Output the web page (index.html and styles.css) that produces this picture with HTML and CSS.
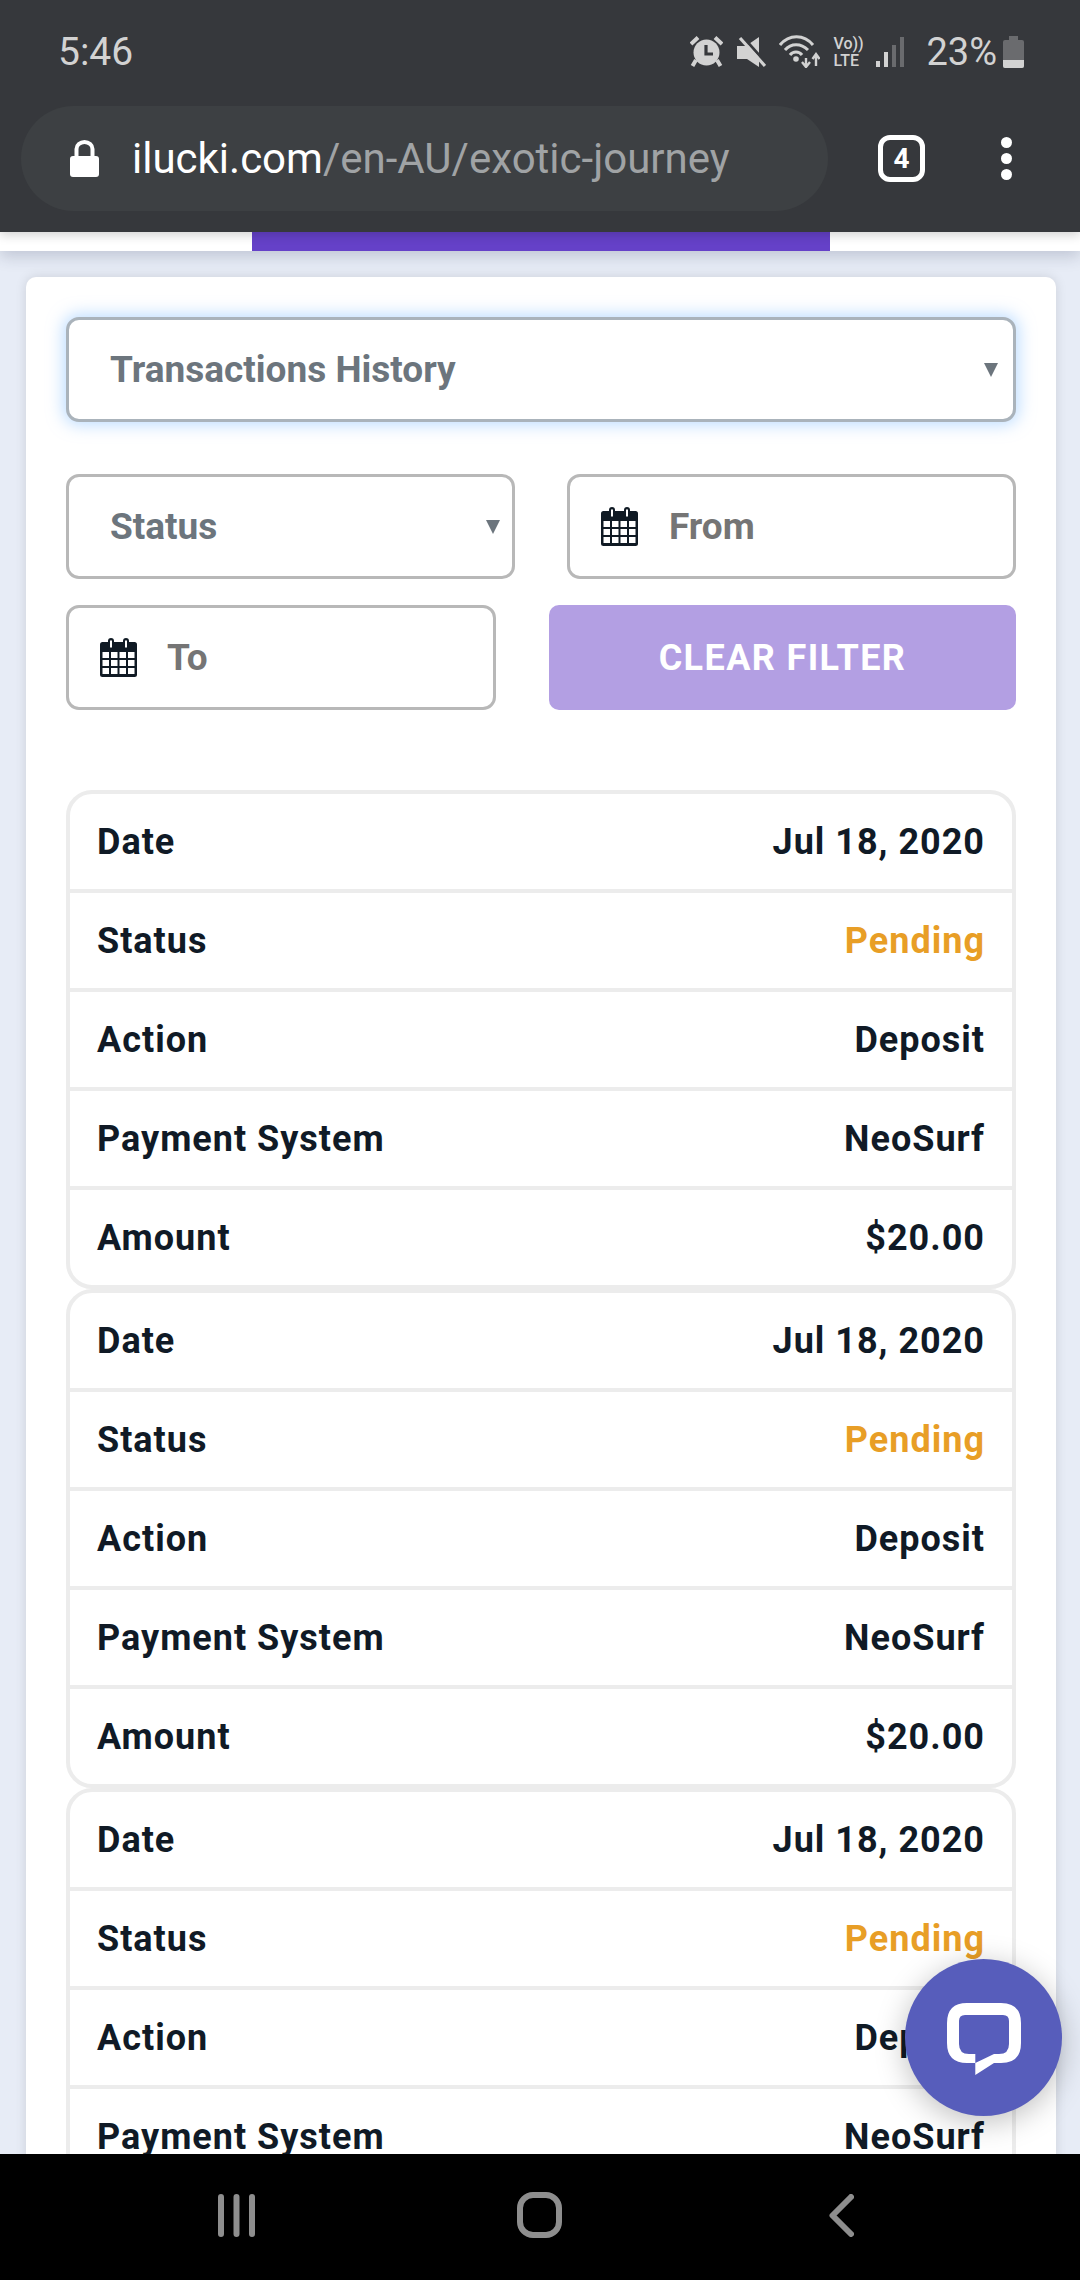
FILE: index.html
```html
<!DOCTYPE html>
<html lang="en">
<head>
    <meta charset="UTF-8">
    <meta name="viewport" content="width=device-width, initial-scale=1.0">
    <title>Transactions History</title>
    <link rel="stylesheet" href="styles.css">
</head>
<body>
    <header class="chrome">
        <div class="status-bar">
            <span class="clock">5:46</span>
            <div class="status-icons">
                <svg class="ic-alarm" width="33" height="32" viewBox="0 0 33 32">
                    <path d="M1 8 L8 1.500 M32 8 L25 1.500" stroke="#d2d2d2" stroke-width="4"/>
                    <path d="M6 24 L2.500 30 M27 24 L30.500 30" stroke="#d2d2d2" stroke-width="4"/>
                    <circle cx="16.500" cy="16.500" r="13" fill="#d2d2d2"/>
                    <path d="M16 9 V18 H23" fill="none" stroke="#36383c" stroke-width="3.200"/>
                </svg>
                <svg class="ic-mute" width="29" height="32" viewBox="0 0 29 32">
                    <path d="M22 1 V31 L10 23 H0 V10 H9 Z" fill="#d2d2d2"/>
                    <path d="M5 0 L30 28" stroke="#36383c" stroke-width="3"/>
                    <path d="M3 2 L28 30" stroke="#d2d2d2" stroke-width="3.200"/>
                </svg>
                <svg class="ic-wifi" width="41" height="33" viewBox="0 0 41 33">
                    <g fill="none" stroke="#d2d2d2" stroke-width="3">
                        <path d="M1 10 C10 -1 25 -1 34 10"/>
                        <path d="M6 15 C12 8 22 8 29 15"/>
                        <path d="M11 20 C14 16 20 16 23 20"/>
                    </g>
                    <circle cx="17" cy="24" r="2.800" fill="#d2d2d2"/>
                    <path d="M27 23 V31 M23 27 L27 32 L31 27" fill="none" stroke="#d2d2d2" stroke-width="2.400"/>
                    <path d="M37 31 V20 M33.500 24 L37 19 L40.500 24" fill="none" stroke="#d2d2d2" stroke-width="2.400"/>
                </svg>
                <div class="volte"><span>Vo))</span><span>LTE</span></div>
                <svg class="ic-signal" width="28" height="30" viewBox="0 0 28 30">
                    <rect x="0" y="24" width="4" height="6" fill="#d2d2d2"/>
                    <rect x="8" y="15" width="4" height="15" fill="#d2d2d2"/>
                    <rect x="16" y="8" width="4" height="22" fill="#6a6b6e"/>
                    <rect x="24" y="0" width="4" height="30" fill="#6a6b6e"/>
                </svg>
                <span class="battery-pct">23%</span>
                <div class="battery"><div class="battery-cap"></div><div class="battery-body"><div class="battery-level"></div></div></div>
            </div>
        </div>
        <div class="toolbar">
            <div class="url-pill">
                <svg class="ic-lock" width="29" height="37" viewBox="0 0 29 37">
                    <path d="M6.500 18 V9 A8 7 0 0 1 22.500 9 V18" fill="none" stroke="#fff" stroke-width="4"/>
                    <rect x="0" y="16" width="29" height="21" rx="3" fill="#fff"/>
                </svg>
                <span class="url"><span class="url-host">ilucki.com</span>/en-AU/exotic-journey</span>
            </div>
            <div class="tab-count">4</div>
            <div class="menu-dots"><i></i><i></i><i></i></div>
        </div>
    </header>

    <div class="subnav"><div class="subnav-active"></div></div>

    <main class="page">
        <section class="card">
            <div class="field field-focus">
                <span>Transactions History</span>
                <i class="caret"></i>
            </div>

            <div class="filter-row">
                <div class="field field-status">
                    <span>Status</span>
                    <i class="caret"></i>
                </div>
                <div class="field field-date field-from">
                    <svg class="ic-cal" width="37" height="39" viewBox="0 0 37 39"><use href="#calendar"/></svg>
                    <span>From</span>
                </div>
            </div>

            <div class="filter-row filter-row-2">
                <div class="field field-date field-to">
                    <svg class="ic-cal" width="37" height="39" viewBox="0 0 37 39"><use href="#calendar"/></svg>
                    <span>To</span>
                </div>
                <button class="btn-clear" type="button">CLEAR FILTER</button>
            </div>

            <div class="tx-list">
                <div class="tx">
                    <div class="tx-row"><span>Date</span><span>Jul 18, 2020</span></div>
                    <div class="tx-row"><span>Status</span><span class="pending">Pending</span></div>
                    <div class="tx-row"><span>Action</span><span>Deposit</span></div>
                    <div class="tx-row"><span>Payment System</span><span>NeoSurf</span></div>
                    <div class="tx-row"><span>Amount</span><span>$20.00</span></div>
                </div>
                <div class="tx">
                    <div class="tx-row"><span>Date</span><span>Jul 18, 2020</span></div>
                    <div class="tx-row"><span>Status</span><span class="pending">Pending</span></div>
                    <div class="tx-row"><span>Action</span><span>Deposit</span></div>
                    <div class="tx-row"><span>Payment System</span><span>NeoSurf</span></div>
                    <div class="tx-row"><span>Amount</span><span>$20.00</span></div>
                </div>
                <div class="tx">
                    <div class="tx-row"><span>Date</span><span>Jul 18, 2020</span></div>
                    <div class="tx-row"><span>Status</span><span class="pending">Pending</span></div>
                    <div class="tx-row"><span>Action</span><span>Deposit</span></div>
                    <div class="tx-row"><span>Payment System</span><span>NeoSurf</span></div>
                    <div class="tx-row"><span>Amount</span><span>$20.00</span></div>
                </div>
            </div>
        </section>
    </main>

    <!-- live chat launcher -->
    <div class="chat-btn">
        <svg width="74" height="72" viewBox="0 0 74 72">
            <path fill="#fff" fill-rule="evenodd" d="M20 0H54Q74 0 74 20V40Q74 60 54 60H47L28.300 72V60H20Q0 60 0 40V20Q0 0 20 0ZM18 12H56Q62 12 62 18V41Q62 51 52 51H47L28.300 60V51H22Q12 51 12 41V18Q12 12 18 12Z"/>
        </svg>
    </div>

    <nav class="nav-bar">
        <svg width="37" height="43" viewBox="0 0 37 43">
            <g fill="none" stroke="#8e8e8e" stroke-width="6" stroke-linecap="round">
                <path d="M3 3 V40 M18.500 3 V40 M34 3 V40"/>
            </g>
        </svg>
        <svg width="45" height="46" viewBox="0 0 45 46">
            <rect x="3" y="3" width="39" height="40" rx="13" fill="none" stroke="#8e8e8e" stroke-width="6"/>
        </svg>
        <svg width="25" height="43" viewBox="0 0 25 43">
            <path d="M22 3 L3.500 21.500 L22 40" fill="none" stroke="#8e8e8e" stroke-width="6" stroke-linecap="round" stroke-linejoin="round"/>
        </svg>
    </nav>

    <svg class="defs" width="0" height="0">
        <defs>
            <g id="calendar">
                <rect x="0" y="4" width="37" height="35" rx="2.500" fill="#101a24"/>
                <rect x="8" y="0" width="6" height="11" rx="3" fill="#101a24"/>
                <rect x="23" y="0" width="6" height="11" rx="3" fill="#101a24"/>
                <rect x="10" y="2.500" width="2" height="7" fill="#fff"/>
                <rect x="25" y="2.500" width="2" height="7" fill="#fff"/>
                <g fill="#fff">
                    <rect x="2.500" y="14" width="6.500" height="6"/><rect x="11" y="14" width="6.500" height="6"/><rect x="19.500" y="14" width="6.500" height="6"/><rect x="28" y="14" width="6.500" height="6"/>
                    <rect x="2.500" y="22" width="6.500" height="6"/><rect x="11" y="22" width="6.500" height="6"/><rect x="19.500" y="22" width="6.500" height="6"/><rect x="28" y="22" width="6.500" height="6"/>
                    <rect x="2.500" y="30" width="6.500" height="6"/><rect x="11" y="30" width="6.500" height="6"/><rect x="19.500" y="30" width="6.500" height="6"/><rect x="28" y="30" width="6.500" height="6"/>
                </g>
            </g>
        </defs>
    </svg>
</body>
</html>
```

FILE: styles.css
```css
* {
    box-sizing: border-box;
}
html, body {
    margin: 0;
    height: 100%;
}
body {
    position: relative;
    width: 1080px;
    height: 2280px;
    overflow: hidden;
    display: flex;
    flex-direction: column;
    font-family: Roboto, "Liberation Sans", sans-serif;
    background-color: #e7ecf6;
}

/* browser chrome */
.chrome {
    position: relative;
    z-index: 3;
    flex: none;
    height: 232px;
    background-color: #36383c;
    box-shadow: 0 3px 10px rgba(0,0,0,0.18);
}
.status-bar {
    display: flex;
    justify-content: space-between;
    align-items: center;
    height: 106px;
    padding: 0 56px 3px 58px;
    color: #d2d2d2;
}
.clock {
    font-size: 39px;
    line-height: 38px;
}
.status-icons {
    display: flex;
    align-items: center;
}
.ic-mute {
    margin-left: 14px;
}
.ic-wifi {
    margin-left: 13px;
}
.volte {
    display: flex;
    flex-direction: column;
    width: 30px;
    margin-left: 13px;
    font-size: 16px;
    font-weight: 500;
    line-height: 17px;
}
.ic-signal {
    margin-left: 13px;
}
.battery-pct {
    margin-left: 22px;
    font-size: 38px;
    line-height: 38px;
}
.battery {
    display: flex;
    flex-direction: column;
    align-items: center;
    margin-left: 6px;
    width: 21px;
}
.battery-cap {
    width: 9px;
    height: 4px;
    background-color: #6a6b6e;
}
.battery-body {
    display: flex;
    align-items: flex-end;
    width: 21px;
    height: 28px;
    border-radius: 2px;
    background-color: #6a6b6e;
    overflow: hidden;
}
.battery-level {
    width: 100%;
    height: 8px;
    background-color: #d2d2d2;
}

.toolbar {
    display: flex;
    align-items: flex-start;
    padding-left: 21px;
}
.url-pill {
    display: flex;
    align-items: center;
    width: 807px;
    height: 105px;
    padding-left: 49px;
    border-radius: 53px;
    background-color: #3d4043;
}
.ic-lock {
    flex: none;
}
.url {
    margin-left: 33px;
    font-size: 42px;
    color: #a0a3a5;
    white-space: nowrap;
}
.url-host {
    color: #fff;
}
.tab-count {
    display: flex;
    align-items: center;
    justify-content: center;
    width: 47px;
    height: 47px;
    margin: 29px 0 0 50px;
    border: 5px solid #fff;
    border-radius: 12px;
    color: #fff;
    font-size: 28px;
    font-weight: 700;
}
.menu-dots {
    display: flex;
    flex-direction: column;
    gap: 5px;
    margin: 31px 0 0 76px;
}
.menu-dots i {
    display: block;
    width: 11px;
    height: 11px;
    border-radius: 50%;
    background-color: #fff;
}

/* site tabs strip, only the active underline is in view */
.subnav {
    position: relative;
    z-index: 2;
    flex: none;
    height: 19px;
    padding-left: 252px;
    background-color: white;
    box-shadow: 0 5px 16px rgba(40,50,80,0.22);
}
.subnav-active {
    width: 578px;
    height: 19px;
    background-color: #6541c8;
}

.page {
    flex: 1;
    min-height: 0;
    overflow: hidden;
    padding: 26px 24px 0 26px;
}
.card {
    height: 2000px;
    padding: 40px 40px 0 40px;
    border-radius: 10px;
    background: white;
    box-shadow: 0 0 12px rgba(0,0,0,0.12);
}

/* filter form */
.field {
    display: flex;
    align-items: center;
    justify-content: space-between;
    height: 105px;
    border: 3px solid #b8b8b8;
    border-radius: 13px;
    background: white;
    color: #6c757d;
    font-size: 37px;
    font-weight: 700;
}
.field-focus {
    padding: 0 15px 0 41px;
    border-color: #aab3bb;
    box-shadow: 0 0 16px 3px rgba(128,189,255,0.5);
}
.filter-row {
    display: flex;
    justify-content: space-between;
    margin-top: 52px;
}
.filter-row-2 {
    margin-top: 26px;
}
.field-status {
    width: 449px;
    padding: 0 12px 0 41px;
}
.field-date {
    justify-content: flex-start;
    color: #757575;
}
.field-from {
    width: 449px;
    padding-left: 31px;
}
.field-from span {
    margin-left: 31px;
}
.field-to {
    width: 430px;
    padding-left: 31px;
}
.field-to span {
    margin-left: 30px;
}
.caret {
    width: 0;
    height: 0;
    border-left: 7.500px solid transparent;
    border-right: 7.500px solid transparent;
    border-top: 14px solid #6c757d;
}
.btn-clear {
    width: 467px;
    height: 105px;
    border: none;
    border-radius: 10px;
    background-color: #b39fe3;
    color: white;
    font-family: inherit;
    font-size: 36px;
    font-weight: 700;
    letter-spacing: 1.400px;
}

/* transactions */
.tx-list {
    margin-top: 80px;
}
.tx {
    border: 4px solid #ececec;
    border-radius: 26px;
}
.tx-row {
    display: flex;
    align-items: center;
    justify-content: space-between;
    height: 95px;
    padding: 0 27px;
    color: #101a26;
    font-size: 36px;
    font-weight: 700;
    letter-spacing: 1px;
}
.tx-row + .tx-row {
    height: 99px;
    border-top: 4px solid #ececec;
}
.pending {
    color: #e89e26;
}

.chat-btn {
    position: absolute;
    left: 905px;
    top: 1959px;
    z-index: 4;
    display: flex;
    align-items: flex-start;
    justify-content: center;
    width: 157px;
    height: 157px;
    padding-top: 44px;
    border-radius: 50%;
    background-color: #575dbb;
    box-shadow: 0 6px 30px rgba(0,0,0,0.25);
}

/* android navigation */
.nav-bar {
    position: relative;
    z-index: 5;
    flex: none;
    display: flex;
    align-items: flex-start;
    height: 126px;
    padding: 40px 0 0 218px;
    background-color: #000;
}
.nav-bar svg:nth-child(2) {
    margin: -2px 0 0 262px;
}
.nav-bar svg:nth-child(3) {
    margin-left: 267px;
}
.defs {
    position: absolute;
}
```
